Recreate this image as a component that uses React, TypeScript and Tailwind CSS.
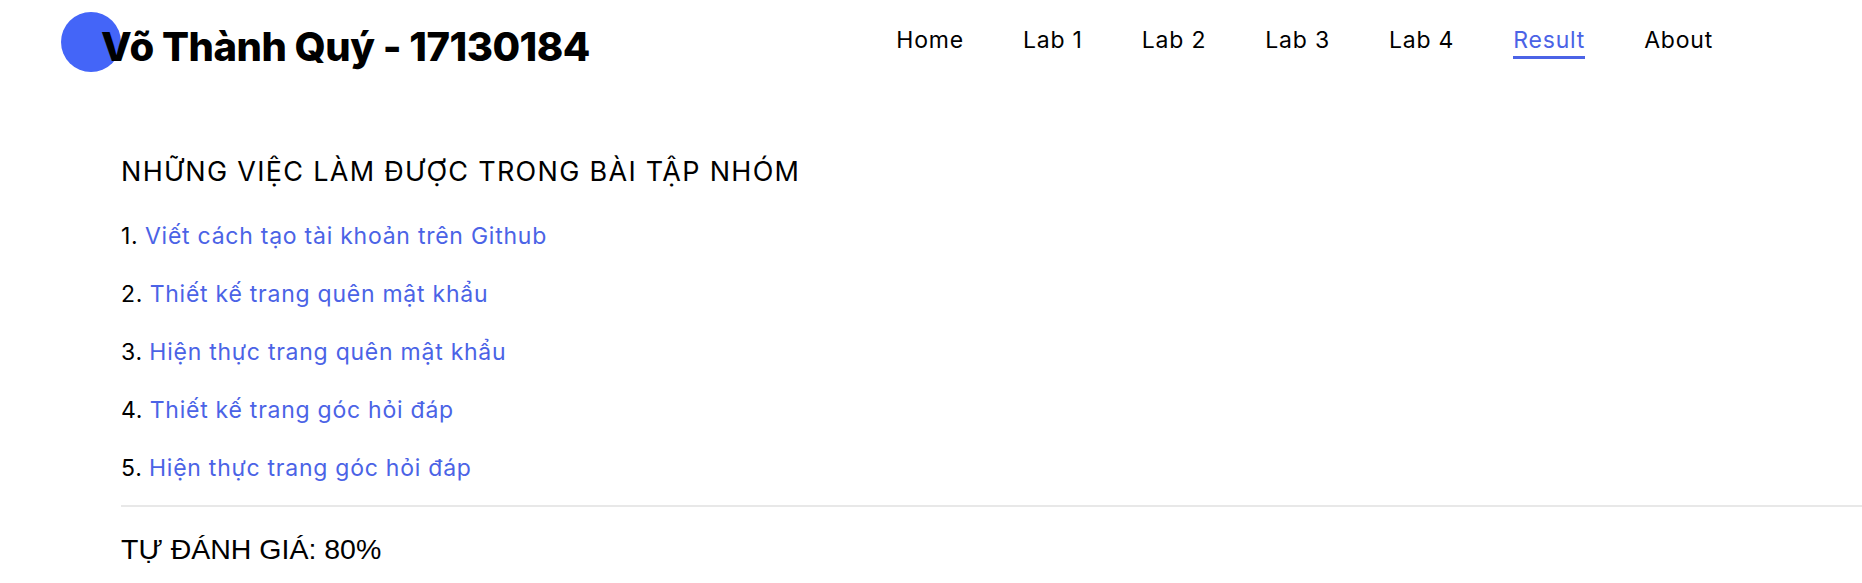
import React from 'react';

const navItems = ['Home', 'Lab 1', 'Lab 2', 'Lab 3', 'Lab 4', 'Result', 'About'];

const tasks = [
  'Viết cách tạo tài khoản trên Github',
  'Thiết kế trang quên mật khẩu',
  'Hiện thực trang quên mật khẩu',
  'Thiết kế trang góc hỏi đáp',
  'Hiện thực trang góc hỏi đáp',
];

export default function App() {
  return (
    <div className="min-h-[583px] bg-white text-black font-['Inter','Noto_Sans',sans-serif]">
      <header className="flex items-start justify-between h-[96px]">
        <div className="relative ml-[61px] mt-[12px]">
          <div className="absolute left-0 top-0 w-[60px] h-[60px] rounded-full bg-[#4465f8]" />
          <h1 className="relative pl-[40px] pt-[15px] text-[40px] leading-none font-extrabold tracking-[-0.5px]">
            Võ Thành Quý - 17130184
          </h1>
        </div>
        <nav className="flex gap-[59px] mr-[149px] mt-[29px]">
          {navItems.map((item) => (
            <a
              key={item}
              href="#"
              className={
                item === 'Result'
                  ? 'text-[23px] leading-none tracking-[0.8px] pb-[4px] text-[#4b63e6] border-b-[3px] border-[#4b63e6]'
                  : 'text-[23px] leading-none tracking-[0.8px] pb-[4px] border-b-[3px] border-transparent'
              }
            >
              {item}
            </a>
          ))}
        </nav>
      </header>

      <main className="pl-[121px] pt-[62px]">
        <h2 className="text-[27px] leading-none tracking-[1.3px]">NHỮNG VIỆC LÀM ĐƯỢC TRONG BÀI TẬP NHÓM</h2>
        <ol className="mt-[22px]">
          {tasks.map((task, i) => (
            <li key={task} className="text-[23px] leading-[58px] tracking-[0.75px]">
              {i + 1}.<span className="tracking-normal"> </span><a href="#" className="text-[#4b63e6]">{task}</a>
            </li>
          ))}
        </ol>
        <hr className="mt-[8px] border-t-2 border-[#e8e8e8]" />
        <h3 className="mt-[28px] text-[28.5px] leading-none font-['Liberation_Sans',Arial,sans-serif]">
          TỰ ĐÁNH GIÁ: 80%
        </h3>
      </main>
    </div>
  );
}
